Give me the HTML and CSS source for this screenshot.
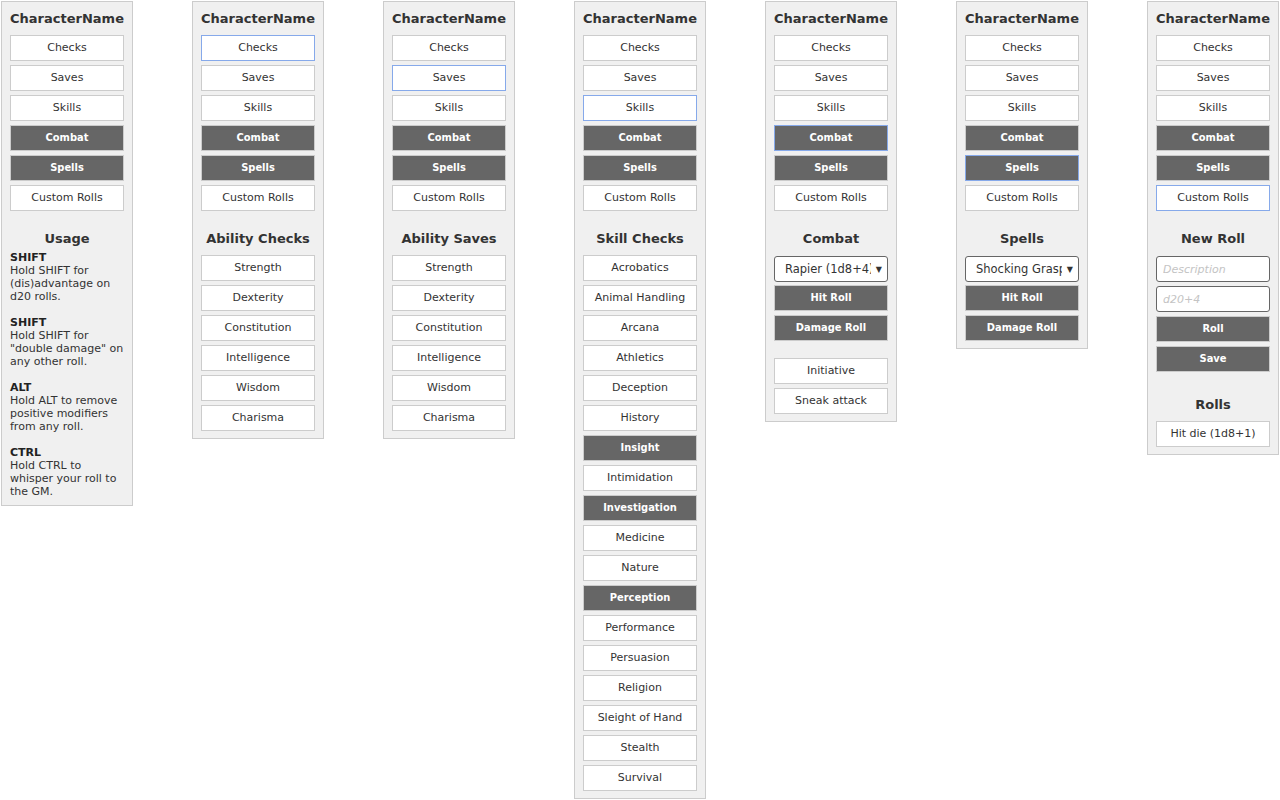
FILE: index.html
```html
<!DOCTYPE html>
<html>
<head>
<meta charset="utf-8">
<link rel="stylesheet" href="styles.css">
</head>
<body>
<div class="app">

  <div class="panel">
    <div class="title">CharacterName</div>
    <div class="btn">Checks</div>
    <div class="btn">Saves</div>
    <div class="btn">Skills</div>
    <div class="btn dark">Combat</div>
    <div class="btn dark">Spells</div>
    <div class="btn">Custom Rolls</div>
    <div class="heading">Usage</div>
    <div class="usage">
      <p><b>SHIFT</b><br>Hold SHIFT for (dis)advantage on d20 rolls.</p>
      <p><b>SHIFT</b><br>Hold SHIFT for "double damage" on any other roll.</p>
      <p><b>ALT</b><br>Hold ALT to remove positive modifiers from any roll.</p>
      <p><b>CTRL</b><br>Hold CTRL to whisper your roll to the GM.</p>
    </div>
  </div>

  <div class="panel">
    <div class="title">CharacterName</div>
    <div class="btn focus">Checks</div>
    <div class="btn">Saves</div>
    <div class="btn">Skills</div>
    <div class="btn dark">Combat</div>
    <div class="btn dark">Spells</div>
    <div class="btn">Custom Rolls</div>
    <div class="heading">Ability Checks</div>
    <div class="btn">Strength</div>
    <div class="btn">Dexterity</div>
    <div class="btn">Constitution</div>
    <div class="btn">Intelligence</div>
    <div class="btn">Wisdom</div>
    <div class="btn">Charisma</div>
  </div>

  <div class="panel">
    <div class="title">CharacterName</div>
    <div class="btn">Checks</div>
    <div class="btn focus">Saves</div>
    <div class="btn">Skills</div>
    <div class="btn dark">Combat</div>
    <div class="btn dark">Spells</div>
    <div class="btn">Custom Rolls</div>
    <div class="heading">Ability Saves</div>
    <div class="btn">Strength</div>
    <div class="btn">Dexterity</div>
    <div class="btn">Constitution</div>
    <div class="btn">Intelligence</div>
    <div class="btn">Wisdom</div>
    <div class="btn">Charisma</div>
  </div>

  <div class="panel">
    <div class="title">CharacterName</div>
    <div class="btn">Checks</div>
    <div class="btn">Saves</div>
    <div class="btn focus">Skills</div>
    <div class="btn dark">Combat</div>
    <div class="btn dark">Spells</div>
    <div class="btn">Custom Rolls</div>
    <div class="heading">Skill Checks</div>
    <div class="btn">Acrobatics</div>
    <div class="btn">Animal Handling</div>
    <div class="btn">Arcana</div>
    <div class="btn">Athletics</div>
    <div class="btn">Deception</div>
    <div class="btn">History</div>
    <div class="btn dark">Insight</div>
    <div class="btn">Intimidation</div>
    <div class="btn dark">Investigation</div>
    <div class="btn">Medicine</div>
    <div class="btn">Nature</div>
    <div class="btn dark">Perception</div>
    <div class="btn">Performance</div>
    <div class="btn">Persuasion</div>
    <div class="btn">Religion</div>
    <div class="btn">Sleight of Hand</div>
    <div class="btn">Stealth</div>
    <div class="btn">Survival</div>
  </div>

  <div class="panel">
    <div class="title">CharacterName</div>
    <div class="btn">Checks</div>
    <div class="btn">Saves</div>
    <div class="btn">Skills</div>
    <div class="btn dark focus">Combat</div>
    <div class="btn dark">Spells</div>
    <div class="btn">Custom Rolls</div>
    <div class="heading">Combat</div>
    <div class="select"><span class="select-text">Rapier (1d8+4)</span><span class="select-arrow">▼</span></div>
    <div class="btn dark">Hit Roll</div>
    <div class="btn dark">Damage Roll</div>
    <div class="btn spaced">Initiative</div>
    <div class="btn">Sneak attack</div>
  </div>

  <div class="panel">
    <div class="title">CharacterName</div>
    <div class="btn">Checks</div>
    <div class="btn">Saves</div>
    <div class="btn">Skills</div>
    <div class="btn dark">Combat</div>
    <div class="btn dark focus">Spells</div>
    <div class="btn">Custom Rolls</div>
    <div class="heading">Spells</div>
    <div class="select"><span class="select-text">Shocking Grasp</span><span class="select-arrow">▼</span></div>
    <div class="btn dark">Hit Roll</div>
    <div class="btn dark">Damage Roll</div>
  </div>

  <div class="panel">
    <div class="title">CharacterName</div>
    <div class="btn">Checks</div>
    <div class="btn">Saves</div>
    <div class="btn">Skills</div>
    <div class="btn dark">Combat</div>
    <div class="btn dark">Spells</div>
    <div class="btn focus">Custom Rolls</div>
    <div class="heading">New Roll</div>
    <input class="field" type="text" placeholder="Description">
    <input class="field" type="text" placeholder="d20+4">
    <div class="btn dark">Roll</div>
    <div class="btn dark">Save</div>
    <div class="heading heading-far">Rolls</div>
    <div class="btn">Hit die (1d8+1)</div>
  </div>

</div>
</body>
</html>
```

FILE: styles.css
```css
html, body {
  margin: 0;
  padding: 0;
  background: #ffffff;
}

body {
  font-family: "DejaVu Sans", Verdana, sans-serif;
  font-size: 11px;
  color: #333333;
}

.app {
  display: flex;
  align-items: flex-start;
  gap: 59px;
  padding: 1px;
}

.panel {
  display: flex;
  flex-direction: column;
  gap: 4px;
  width: 114px;
  padding: 9px 8px 7px 8px;
  background: #f0f0f0;
  border: 1px solid #cccccc;
  flex-shrink: 0;
}

.title {
  font-size: 13px;
  font-weight: bold;
  line-height: 16px;
  text-align: center;
  color: #333333;
  margin-bottom: 4px;
  white-space: nowrap;
}

.heading {
  font-size: 13px;
  font-weight: bold;
  line-height: 16px;
  text-align: center;
  color: #333333;
  margin-top: 16px;
  margin-bottom: 4px;
}

.heading-far {
  margin-top: 21px;
}

.btn {
  box-sizing: border-box;
  height: 26px;
  line-height: 24px;
  border: 1px solid #cccccc;
  background: #ffffff;
  color: #333333;
  text-align: center;
  white-space: nowrap;
}

.btn.dark {
  background: #666666;
  color: #ffffff;
  font-family: "DejaVu Sans Condensed", "DejaVu Sans", sans-serif;
  font-stretch: condensed;
  font-weight: bold;
}

.btn.focus {
  border-color: #86a9ea;
}

.btn.spaced {
  margin-top: 13px;
}

.usage {
  margin-top: -4px;
  line-height: 13px;
  color: #333333;
}

.usage p {
  margin: 0 0 13px 0;
}

.usage p:last-child {
  margin-bottom: 0;
}

.usage b {
  color: #222222;
}

.select {
  box-sizing: border-box;
  height: 26px;
  display: flex;
  align-items: center;
  border: 1px solid #666666;
  border-radius: 3px;
  background: #ffffff;
  padding: 0 5px 0 10px;
  margin-top: 1px;
  margin-bottom: -1px;
}

.select-text {
  flex: 1;
  overflow: hidden;
  white-space: nowrap;
  font-size: 11.5px;
  color: #333333;
}

.select-arrow {
  font-size: 8px;
  color: #333333;
  margin-left: 5px;
}

.field {
  box-sizing: border-box;
  width: 114px;
  height: 26px;
  margin: 0;
  padding: 0 6px;
  border: 1px solid #666666;
  border-radius: 3px;
  background: #ffffff;
  font-family: "DejaVu Sans", Verdana, sans-serif;
  font-size: 11px;
  color: #333333;
  outline: none;
}

.field:first-of-type {
  margin-top: 1px;
}

.field::placeholder {
  color: #c4c4c4;
  font-style: italic;
}
```
